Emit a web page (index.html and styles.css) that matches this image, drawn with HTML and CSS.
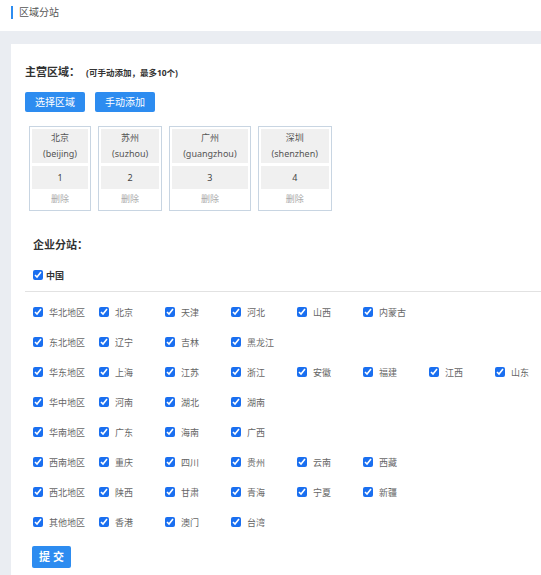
FILE: index.html
```html
<!DOCTYPE html>
<html>
<head>
    <meta charset="utf-8"/>
    <title>区域分站</title>
    <link rel="stylesheet" href="styles.css">
</head>
<body>

<div class="top-bar">
    <span class="top-title">区域分站</span>
</div>

<div class="main">
    <div class="panel">
        <div class="sec-title">主营区域：<small>(可手动添加，最多10个)</small></div>
        <div class="btns">
            <a class="btn">选择区域</a>
            <a class="btn">手动添加</a>
        </div>

        <div class="city-list">
            <div class="city">
                <div class="city-name">北京<br>(beijing)</div>
                <div class="city-num">1</div>
                <div class="city-del">删除</div>
            </div>
            <div class="city">
                <div class="city-name">苏州<br>(suzhou)</div>
                <div class="city-num">2</div>
                <div class="city-del">删除</div>
            </div>
            <div class="city">
                <div class="city-name">广州<br>(guangzhou)</div>
                <div class="city-num">3</div>
                <div class="city-del">删除</div>
            </div>
            <div class="city">
                <div class="city-name">深圳<br>(shenzhen)</div>
                <div class="city-num">4</div>
                <div class="city-del">删除</div>
            </div>
        </div>

        <div class="sec-title sub">企业分站：</div>
        <label class="country"><input type="checkbox" checked><span>中国</span></label>
        <div class="line"></div>

        <div class="area-list">
            <div class="row">
                <label class="item"><input type="checkbox" checked><span>华北地区</span></label>
                <label class="item"><input type="checkbox" checked><span>北京</span></label>
                <label class="item"><input type="checkbox" checked><span>天津</span></label>
                <label class="item"><input type="checkbox" checked><span>河北</span></label>
                <label class="item"><input type="checkbox" checked><span>山西</span></label>
                <label class="item"><input type="checkbox" checked><span>内蒙古</span></label>
            </div>
            <div class="row">
                <label class="item"><input type="checkbox" checked><span>东北地区</span></label>
                <label class="item"><input type="checkbox" checked><span>辽宁</span></label>
                <label class="item"><input type="checkbox" checked><span>吉林</span></label>
                <label class="item"><input type="checkbox" checked><span>黑龙江</span></label>
            </div>
            <div class="row">
                <label class="item"><input type="checkbox" checked><span>华东地区</span></label>
                <label class="item"><input type="checkbox" checked><span>上海</span></label>
                <label class="item"><input type="checkbox" checked><span>江苏</span></label>
                <label class="item"><input type="checkbox" checked><span>浙江</span></label>
                <label class="item"><input type="checkbox" checked><span>安徽</span></label>
                <label class="item"><input type="checkbox" checked><span>福建</span></label>
                <label class="item"><input type="checkbox" checked><span>江西</span></label>
                <label class="item"><input type="checkbox" checked><span>山东</span></label>
            </div>
            <div class="row">
                <label class="item"><input type="checkbox" checked><span>华中地区</span></label>
                <label class="item"><input type="checkbox" checked><span>河南</span></label>
                <label class="item"><input type="checkbox" checked><span>湖北</span></label>
                <label class="item"><input type="checkbox" checked><span>湖南</span></label>
            </div>
            <div class="row">
                <label class="item"><input type="checkbox" checked><span>华南地区</span></label>
                <label class="item"><input type="checkbox" checked><span>广东</span></label>
                <label class="item"><input type="checkbox" checked><span>海南</span></label>
                <label class="item"><input type="checkbox" checked><span>广西</span></label>
            </div>
            <div class="row">
                <label class="item"><input type="checkbox" checked><span>西南地区</span></label>
                <label class="item"><input type="checkbox" checked><span>重庆</span></label>
                <label class="item"><input type="checkbox" checked><span>四川</span></label>
                <label class="item"><input type="checkbox" checked><span>贵州</span></label>
                <label class="item"><input type="checkbox" checked><span>云南</span></label>
                <label class="item"><input type="checkbox" checked><span>西藏</span></label>
            </div>
            <div class="row">
                <label class="item"><input type="checkbox" checked><span>西北地区</span></label>
                <label class="item"><input type="checkbox" checked><span>陕西</span></label>
                <label class="item"><input type="checkbox" checked><span>甘肃</span></label>
                <label class="item"><input type="checkbox" checked><span>青海</span></label>
                <label class="item"><input type="checkbox" checked><span>宁夏</span></label>
                <label class="item"><input type="checkbox" checked><span>新疆</span></label>
            </div>
            <div class="row">
                <label class="item"><input type="checkbox" checked><span>其他地区</span></label>
                <label class="item"><input type="checkbox" checked><span>香港</span></label>
                <label class="item"><input type="checkbox" checked><span>澳门</span></label>
                <label class="item"><input type="checkbox" checked><span>台湾</span></label>
            </div>
        </div>

        <a class="btn btn-submit">提 交</a>
    </div>
</div>

</body>
</html>
```

FILE: styles.css
```css
html, body {
    margin: 0;
    padding: 0;
    overflow: hidden;
}

body {
    font-family: "Noto Sans", "Noto Sans CJK SC", sans-serif;
    font-size: 9px;
    color: #555;
    background: #fff;
}

.top-bar {
    height: 31px;
    background: #fff;
    padding-left: 11px;
    box-sizing: border-box;
    display: flex;
    align-items: flex-start;
    padding-top: 6px;
}

.top-title {
    border-left: 2px solid #2d8cf0;
    padding-left: 6px;
    line-height: 13px;
    font-size: 10px;
    color: #555;
}

.main {
    background: #eaedf2;
    padding: 13px 0 0 11px;
}

.panel {
    background: #fff;
    padding: 18px 0 10px 14px;
    overflow: hidden;
}

.sec-title {
    font-size: 11px;
    font-weight: bold;
    color: #333;
    line-height: 20px;
}

.sec-title small {
    font-size: 8.5px;
    font-weight: bold;
    margin-left: 6px;
}

.btns {
    margin-top: 9px;
    display: flex;
    gap: 10px;
}

.btn {
    display: inline-block;
    width: 60px;
    height: 20px;
    line-height: 20px;
    text-align: center;
    background: #2d8cf0;
    color: #fff;
    border-radius: 2px;
    font-size: 10px;
    cursor: pointer;
}

.city-list {
    margin: 14px 0 0 4px;
    display: flex;
    gap: 7px;
}

.city {
    border: 1px solid #c8d5e2;
    padding: 2px 2px 1px;
    text-align: center;
}

.city-name {
    background: #f0f0f0;
    padding: 1px 11px;
    line-height: 16px;
    color: #555;
    white-space: nowrap;
}

.city-num {
    margin-top: 3px;
    background: #f0f0f0;
    height: 23px;
    line-height: 23px;
    color: #444;
}

.city-del {
    line-height: 20px;
    color: #aaa;
}

.sec-title.sub {
    margin: 24px 0 0 8px;
}

.country {
    display: flex;
    align-items: center;
    margin: 10px 0 0 8px;
    height: 20px;
    font-weight: bold;
    color: #333;
    gap: 3px;
}

input[type=checkbox] {
    width: 10px;
    height: 10px;
    margin: 0;
    accent-color: #1a6ff0;
}

.line {
    margin-top: 6px;
    border-top: 1px solid #e2e2e2;
}

.area-list {
    margin: 5px 0 0 8px;
}

.row {
    display: flex;
    height: 30px;
    align-items: center;
}

.item {
    flex: 0 0 66px;
    display: flex;
    align-items: center;
    color: #666;
    white-space: nowrap;
}

.item span {
    margin-left: 6px;
}

.btn-submit {
    margin: 9px 0 0 7px;
    width: 39px;
    height: 22px;
    line-height: 22px;
    font-size: 11px;
    font-weight: bold;
}
```
